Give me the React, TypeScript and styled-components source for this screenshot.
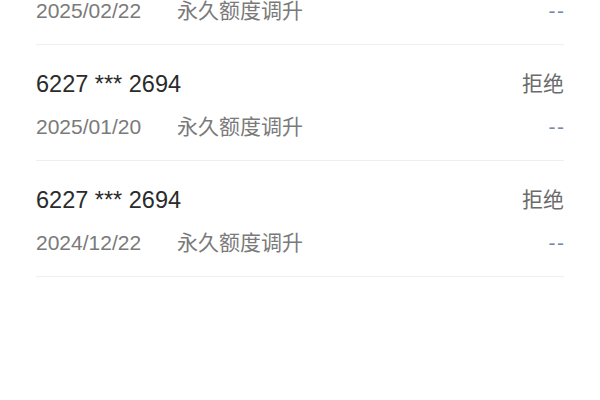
import * as React from 'react';
import styled, { createGlobalStyle } from 'styled-components';

const GlobalStyle = createGlobalStyle`
  html, body {
    margin: 0;
    padding: 0;
    background: #ffffff;
  }
  body {
    font-family: "Liberation Sans", "Noto Sans CJK SC", sans-serif;
    -webkit-font-smoothing: antialiased;
  }
`;

const Page = styled.div`
  width: 600px;
  height: 400px;
  overflow: hidden;
  background: #ffffff;
`;

// the list is scrolled: the first record sits partly above the top edge
const List = styled.ul`
  list-style: none;
  margin: -71px 0 0 0;
  padding: 0 36px;
`;

const Record = styled.li`
  display: flex;
  flex-direction: column;
  gap: 14px;
  padding: 24px 0 19px;
  border-bottom: 1px solid #efefef;
`;

const Line = styled.div`
  display: flex;
  align-items: center;
  justify-content: space-between;
`;

const Card = styled.span`
  font-size: 23.5px;
  line-height: 30px;
  color: #2b2b2b;
`;

const Status = styled.span`
  font-size: 21px;
  line-height: 30px;
  color: #6b6b6b;
`;

const Meta = styled.div`
  display: flex;
  align-items: center;
  gap: 36px;
  font-size: 21px;
  line-height: 28px;
  color: #7a7a7a;
`;

const Amount = styled.span`
  font-size: 21px;
  line-height: 28px;
  color: #7489ad;
  letter-spacing: 1.5px;
  margin-right: -1.5px;
`;

interface Item {
  card: string;
  status: string;
  date: string;
  kind: string;
  amount: string;
}

const records: Item[] = [
  { card: '6227 *** 2694', status: '拒绝', date: '2025/02/22', kind: '永久额度调升', amount: '--' },
  { card: '6227 *** 2694', status: '拒绝', date: '2025/01/20', kind: '永久额度调升', amount: '--' },
  { card: '6227 *** 2694', status: '拒绝', date: '2024/12/22', kind: '永久额度调升', amount: '--' }
];

export default function App() {
  return (
    <Page>
      <GlobalStyle />
      <List>
        {records.map((r, i) => (
          <Record key={i}>
            <Line>
              <Card>{r.card}</Card>
              <Status>{r.status}</Status>
            </Line>
            <Line>
              <Meta>
                <span>{r.date}</span>
                <span>{r.kind}</span>
              </Meta>
              <Amount>{r.amount}</Amount>
            </Line>
          </Record>
        ))}
      </List>
    </Page>
  );
}
